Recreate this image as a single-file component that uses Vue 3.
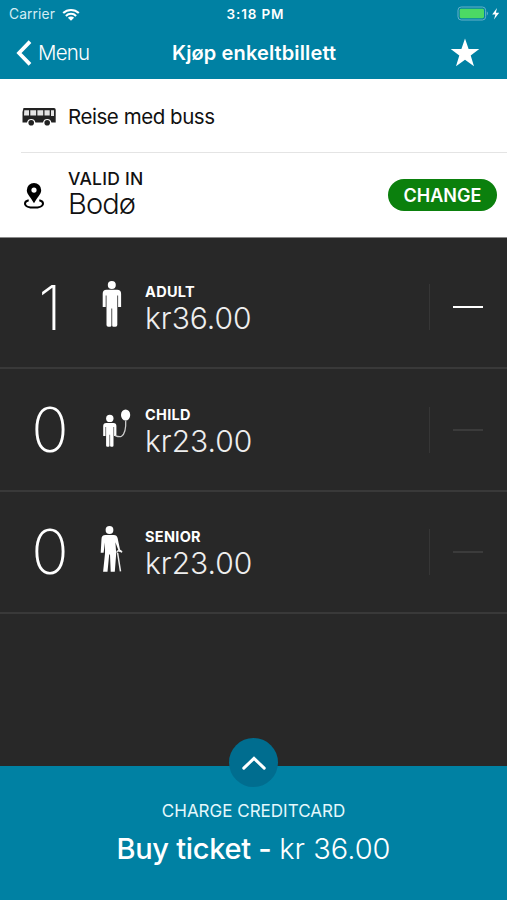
<template>
  <div class="screen">
    <header class="header">
      <div class="status">
        <div class="carrier">
          <span class="carrier-name">Carrier</span>
          <svg class="wifi" viewBox="0 0 18 13">
            <path
              d="M1.2 5.1a11.2 11.2 0 0 1 15.6 0M3.9 7.9a7.3 7.3 0 0 1 10.2 0"
              fill="none"
              stroke="#fff"
              stroke-width="2.1"
            />
            <path d="M9 12.8 5.9 9.7a4.4 4.4 0 0 1 6.2 0z" fill="#fff" />
          </svg>
        </div>
        <span class="clock">3:18 PM</span>
        <svg class="battery" viewBox="0 0 45 16">
          <rect x="1" y="1" width="27.6" height="13" rx="3.2" fill="none" stroke="#65b1c9" />
          <rect x="2.7" y="2.8" width="24.3" height="9.4" rx="1.4" fill="#4cd964" />
          <path d="M29.8 5.3q2.3 2.2 0 4.4z" fill="#65b1c9" />
          <path d="M40 2 35.2 8.5h3.2L37 13.6l5.2-6.9h-3.3z" fill="#fff" />
        </svg>
      </div>
      <nav class="nav">
        <button class="back">
          <svg class="back-icon" viewBox="0 0 16 26">
            <path d="M14 1.6 3 13l11 11.4" fill="none" stroke="#fff" stroke-width="3.7" />
          </svg>
          <span class="back-label">Menu</span>
        </button>
        <h1 class="title">Kjøp enkeltbillett</h1>
        <svg class="star" viewBox="0 0 30 29">
          <path
            d="M15 0.5 18.6 11H29.3L20.7 17.4 24 28.3 15 21.7 6 28.3 9.3 17.4 0.7 11H11.4z"
            fill="#fff"
          />
        </svg>
      </nav>
    </header>

    <section class="info">
      <div class="info-row transport">
        <svg class="bus" viewBox="0 0 34 18">
          <path
            d="M1.5 0H32a1.7 1.7 0 0 1 1.7 1.7V14.5H29.400a4.300 4.300 0 0 0-8.400 0H13.400a4.300 4.300 0 0 0-8.400 0H.5V4z"
            fill="#222"
          />
          <path
            d="M2.3 2.2H7V7.6H2zM8.3 2.2h5.8v5.4H8.3zM15.4 2.2h5.8v5.4h-5.8zM22.5 2.2h5.2v5.4h-5.2zM29 2.2h3V8h-3z"
            fill="#e4e4e4"
          />
          <circle cx="9.2" cy="14.8" r="2.8" fill="#222" />
          <circle cx="25.2" cy="14.8" r="2.8" fill="#222" />
        </svg>
        <span class="transport-name">Reise med buss</span>
      </div>
      <div class="info-row zone">
        <svg class="pin" viewBox="0 0 22 28">
          <path
            d="M11 1a7.200 7.200 0 0 0-7.200 7.200c0 4 4 7 7.200 13 3.200-6 7.200-9 7.200-13a7.200 7.200 0 0 0-7.200-7.200z"
            fill="#000"
          />
          <circle cx="11" cy="8.100" r="2.600" fill="#fff" />
          <path
            d="M5.7 18.2C3 18.8 2 20.1 2 21.4 2 24 6 25.6 11 25.6s9-1.6 9-4.2c0-1.3-1-2.6-3.7-3.2"
            fill="none"
            stroke="#000"
            stroke-width="2"
          />
        </svg>
        <div class="zone-text">
          <span class="zone-label">VALID IN</span>
          <span class="zone-name">Bodø</span>
        </div>
        <button class="change">CHANGE</button>
      </div>
    </section>

    <main class="tickets">
      <div v-for="t in tickets" :key="t.id" class="ticket">
        <span class="count">{{ t.count }}</span>
        <svg class="person" viewBox="0 0 36 50">
          <g v-if="t.id === 'adult'" fill="#fff">
            <circle cx="13.8" cy="5" r="4" />
            <path
              d="M8.5 9.7h10.6a4 4 0 0 1 4 4V27h-3V15.5h-.8V45a1.8 1.8 0 0 1-1.8 1.8h-1.7A1.4 1.4 0 0 1 14.2 45.4V28.5h-.8V45.4A1.4 1.4 0 0 1 12 46.8h-1.7A1.8 1.8 0 0 1 8.5 45V15.5h-.8V27h-3V13.7a4 4 0 0 1 3.8-4z"
            />
          </g>
          <g v-else-if="t.id === 'child'" fill="#fff">
            <circle cx="11.8" cy="15.4" r="3.7" />
            <path
              d="M8.2 20h7.2a3 3 0 0 1 3 3V33h-2.3V24h-.6V42.5q0 1.2-1.2 1.2h-1.2q-1 0-1-1V31.7h-.6V42.7q0 1-1 1H9.3q-1.2 0-1.2-1.2V24h-.6V33H5.2V23a3 3 0 0 1 3-3z"
            />
            <ellipse cx="27.6" cy="12" rx="4.6" ry="5.6" />
            <path
              d="M27.7 17.5C28 24 27 31 23.5 33.2c-2 1.1-4 .3-6.2-.5"
              fill="none"
              stroke="#ccc"
              stroke-width="1.3"
            />
          </g>
          <g v-else fill="#fff">
            <circle cx="11.5" cy="5" r="3.9" />
            <path
              d="M7.5 10h8.3a4 4 0 0 1 3.8 3l2.4 11.5 2 1.5-.5 1.3-2.7-1-3.4-9 .8 11.2-1.4 18.3h-4.1L12 29.5h-.8L9.5 46.8H5.1L7 28.500V17.5L5.600 27.700H2.700L3.500 14a4 4 0 0 1 4-4z"
            />
            <path
              d="M18.8 27.6q.3-2 2.2-1.8L24.2 27M19.6 28 22.5 46.3"
              fill="none"
              stroke="#eee"
              stroke-width="1.5"
            />
          </g>
        </svg>
        <div class="fare">
          <span class="fare-label">{{ t.label }}</span>
          <span class="fare-price">{{ t.price }}</span>
        </div>
        <button class="minus" :class="{ disabled: t.count === 0 }">
          <span class="minus-bar"></span>
        </button>
      </div>
    </main>

    <footer class="checkout">
      <button class="expand">
        <svg class="expand-icon" viewBox="0 0 26 16">
          <path
            d="M2.8 13.2 13 3.3l10.2 9.9"
            fill="none"
            stroke="#fff"
            stroke-width="3"
            stroke-linecap="round"
          />
        </svg>
      </button>
      <span class="charge">CHARGE CREDITCARD</span>
      <div class="buy"><span class="buy-action">Buy ticket -</span><span class="buy-price">kr 36.00</span></div>
    </footer>
  </div>
</template>

<script setup>
import { ref } from "vue";

const tickets = ref([
  { id: "adult", label: "ADULT", count: 1, price: "kr36.00" },
  { id: "child", label: "CHILD", count: 0, price: "kr23.00" },
  { id: "senior", label: "SENIOR", count: 0, price: "kr23.00" },
]);
</script>

<style>
body {
  background: #282828;
}
</style>

<style scoped>
.screen {
  display: flex;
  flex-direction: column;
  width: 507px;
  height: 900px;
  overflow: hidden;
  font-family: Inter, "Liberation Sans", sans-serif;
  background: #282828;
  color: #fff;
}

.screen * {
  box-sizing: border-box;
}

.screen span,
.title {
  white-space: nowrap;
}

button {
  border: 0;
  padding: 0;
  background: none;
  color: inherit;
  font-family: inherit;
}

svg {
  display: block;
  flex: none;
}

.header {
  height: 79px;
  flex: none;
  background: #0081a3;
}

.status,
.nav {
  display: grid;
  grid-template-columns: 1fr auto 1fr;
  align-items: center;
}

/* Status bar */
.status {
  height: 28px;
  padding: 0 5px 0 9px;
}

.carrier {
  display: flex;
  align-items: center;
  gap: 7px;
}

.carrier-name {
  font-size: 13.8px;
  letter-spacing: 0.1px;
  color: #d3edf4;
}

.wifi {
  width: 18px;
  height: 13px;
}

.clock {
  font-size: 13.5px;
  font-weight: 600;
  letter-spacing: 0.85px;
}

.battery {
  width: 45px;
  height: 16px;
  justify-self: end;
}

/* Navigation bar */
.nav {
  height: 50px;
  padding: 0 27px 1px 16px;
  grid-template-columns: 156px auto 1fr;
}

.back {
  display: flex;
  align-items: center;
  gap: 6px;
}

.back-icon {
  width: 16px;
  height: 26px;
}

.back-label {
  font-size: 20.5px;
  font-weight: 300;
  letter-spacing: -0.8px;
}

.title {
  margin: 0;
  font-size: 20px;
  font-weight: 600;
  letter-spacing: 0.12px;
}

.star {
  width: 30px;
  height: 29px;
  justify-self: end;
}

/* Ticket info */
.info {
  flex: none;
  height: 159px;
  background: #fff;
  color: #111;
  border-bottom: 1px solid #8a8a8a;
}

.info-row {
  display: flex;
  align-items: center;
}

.transport {
  height: 74px;
  margin-left: 21px;
  padding: 2px 0 0 1px;
  border-bottom: 1px solid #e4e4e4;
}

.bus {
  width: 34px;
  height: 18px;
}

.transport-name {
  margin-left: 12px;
  font-size: 20.5px;
  letter-spacing: -0.45px;
}

.zone {
  height: 84px;
  padding: 0 10px 0 23px;
}

.pin {
  width: 22px;
  height: 28px;
  margin-top: 2px;
}

.zone-text {
  display: flex;
  flex-direction: column;
  margin-left: 23px;
  padding-bottom: 2px;
  flex: 1;
}

.zone-label {
  font-size: 17.5px;
  line-height: 20px;
  font-weight: 500;
  letter-spacing: 0.25px;
}

.zone-name {
  font-size: 29px;
  line-height: 30px;
  font-weight: 300;
  letter-spacing: -0.9px;
}

.change {
  width: 109px;
  height: 32px;
  border-radius: 16px;
  background: #0b800d;
  color: #fff;
  font-size: 18px;
  font-weight: 600;
}

/* Ticket categories */
.tickets {
  flex: 1;
  padding-top: 9px;
}

.ticket {
  display: flex;
  align-items: center;
  height: 122.4px;
  border-bottom: 2px solid #393939;
}

.count {
  width: 100px;
  padding-top: 1px;
  text-align: center;
  font-size: 62px;
  line-height: 60px;
  font-weight: 200;
}

.person {
  width: 36px;
  height: 50px;
  margin: 0 11px 4px -2px;
}

.fare {
  display: flex;
  flex-direction: column;
  padding-top: 3px;
  flex: 1;
}

.fare-label {
  font-size: 14.5px;
  line-height: 20px;
  font-weight: 700;
  letter-spacing: 0.3px;
}

.fare-price {
  font-size: 30px;
  line-height: 33px;
  font-weight: 300;
  color: #eee;
}

.minus {
  display: flex;
  align-items: center;
  justify-content: center;
  width: 78px;
  height: 46px;
  padding-right: 2px;
  border-left: 1px solid #363636;
}

.minus-bar {
  width: 30px;
  height: 2px;
  background: #fff;
}

.disabled .minus-bar {
  background: #3b3b3b;
}

/* Checkout */
.checkout {
  flex: none;
  display: flex;
  flex-direction: column;
  align-items: center;
  height: 134px;
  background: #0081a3;
}

.expand {
  display: flex;
  align-items: center;
  justify-content: center;
  width: 49px;
  height: 49px;
  margin-top: -28px;
  border-radius: 50%;
  background: #006d8f;
}

.expand-icon {
  width: 26px;
  height: 16px;
}

.charge {
  margin-top: 14px;
  font-size: 17px;
  line-height: 20px;
  color: #e5f8fc;
}

.buy {
  display: flex;
  gap: 8px;
  margin-top: 10px;
  font-size: 29px;
  line-height: 36px;
}

.buy-action {
  font-weight: 500;
  letter-spacing: -0.3px;
}

.buy-price {
  font-weight: 300;
}
</style>
